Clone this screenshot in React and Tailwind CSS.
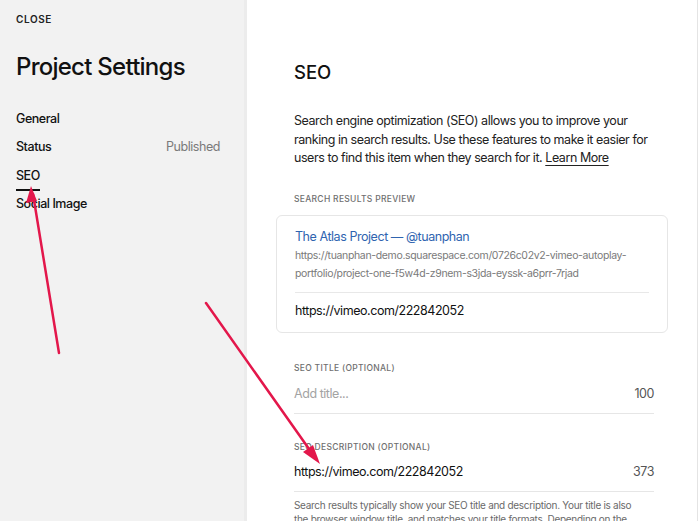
const font = { fontFamily: "Inter, 'Liberation Sans', sans-serif" };

function NavItem({ label, value, active }) {
  return (
    <div className="flex h-[28.5px] items-center justify-between">
      <span className="relative text-[12.5px] font-medium tracking-[-0.45px] text-[#111]">
        {label}
        {active && <span className="absolute left-0 right-0 -bottom-[5px] h-[2px] bg-[#111]"></span>}
      </span>
      {value && <span className="text-[12.5px] tracking-[-0.45px] text-[#7a7a7a]">{value}</span>}
    </div>
  );
}

function Label({ children }) {
  return <div className="text-[8.5px] font-medium uppercase leading-[12px] tracking-[0.3px] text-[#6f6f6f]">{children}</div>;
}

export default function App() {
  return (
    <div className="relative flex h-[521px] w-[700px] overflow-hidden bg-white" style={font}>
      {/* Sidebar */}
      <aside className="w-[247px] shrink-0 border-r-[3px] border-[#ececec] bg-[#f2f2f2] pl-4 pr-[24px] pt-[12px]">
        <div className="text-[10px] font-semibold tracking-[0.6px] text-[#222]">CLOSE</div>
        <h1 className="mt-[25px] text-[24px] font-medium leading-[30px] tracking-[-0.75px] text-[#111]">Project Settings</h1>
        <nav className="mt-[23px] flex flex-col">
          <NavItem label="General" />
          <NavItem label="Status" value="Published" />
          <NavItem label="SEO" active />
          <NavItem label="Social Image" />
        </nav>
      </aside>

      {/* Main */}
      <main className="flex flex-1 bg-white">
        <div className="flex-1 pl-[47px] pr-[43px] pt-[58px]">
          <h2 className="text-[18.5px] font-medium leading-[28px] text-[#111]">SEO</h2>
          <p className="mt-[26px] whitespace-nowrap text-[12.5px] leading-[18.5px] tracking-[-0.45px] text-[#222]">
            Search engine optimization (SEO) allows you to improve your<br />
            ranking in search results. Use these features to make it easier for<br />
            users to find this item when they search for it.{" "}
            <span className="underline underline-offset-[3px]">Learn More</span>
          </p>

          <div className="mt-[25px]">
            <Label>Search results preview</Label>
          </div>
          <div className="-ml-[18px] -mr-[14px] mt-[10px] rounded-[6px] border border-[#e6e6e6] px-[18px] pb-[12px] pt-[12px]">
            <div className="text-[12.5px] leading-[18px] tracking-[-0.45px] text-[#2f64b0]">The Atlas Project — @tuanphan</div>
            <div className="mt-[1px] whitespace-nowrap text-[10.5px] leading-[18px] tracking-[-0.35px] text-[#7a7a7a]">
              https://tuanphan-demo.squarespace.com/0726c02v2-vimeo-autoplay-<br />
              portfolio/project-one-f5w4d-z9nem-s3jda-eyssk-a6prr-7rjad
            </div>
            <div className="mt-[9px] border-t border-[#e8e8e8] pt-[9px] text-[12.5px] leading-[18px] tracking-[-0.45px] text-[#111]">
              https://vimeo.com/222842052
            </div>
          </div>

          <div className="mt-[29px]">
            <Label>SEO Title (Optional)</Label>
          </div>
          <div className="mt-[11px] flex items-center justify-between border-b border-[#e6e6e6] pb-[10px] text-[12.5px] leading-[18px] tracking-[-0.45px]">
            <span className="text-[#a3a3a3]">Add title...</span>
            <span className="text-[#555]">100</span>
          </div>

          <div className="mt-[27px]">
            <Label>SEO Description (Optional)</Label>
          </div>
          <div className="mt-[10px] flex items-center justify-between border-b border-[#e6e6e6] pb-[10px] text-[12.5px] leading-[18px] tracking-[-0.45px]">
            <span className="text-[#111]">https://vimeo.com/222842052</span>
            <span className="text-[#555]">373</span>
          </div>
          <p className="mt-[6px] whitespace-nowrap text-[10px] leading-[14px] tracking-[-0.3px] text-[#6a6a6a]">
            Search results typically show your SEO title and description. Your title is also<br />
            the browser window title, and matches your{" "}
            <span className="underline underline-offset-2">title formats</span>. Depending on the
          </p>
        </div>
        <div className="w-[3px] shrink-0 border-l border-[#e4e4e4] bg-white"></div>
      </main>

      {/* Annotation arrows */}
      <svg className="pointer-events-none absolute inset-0" width="700" height="521" viewBox="0 0 700 521">
        <g stroke="#e3174b" strokeWidth="2.5" strokeLinecap="round" fill="none">
          <line x1="59" y1="353" x2="33" y2="194" />
          <line x1="206" y1="303" x2="314" y2="456" />
        </g>
        <g fill="#e3174b">
          <polygon points="31,186 26,203 37,201" />
          <polygon points="320,464 303,452 313,445" />
        </g>
      </svg>
    </div>
  );
}
